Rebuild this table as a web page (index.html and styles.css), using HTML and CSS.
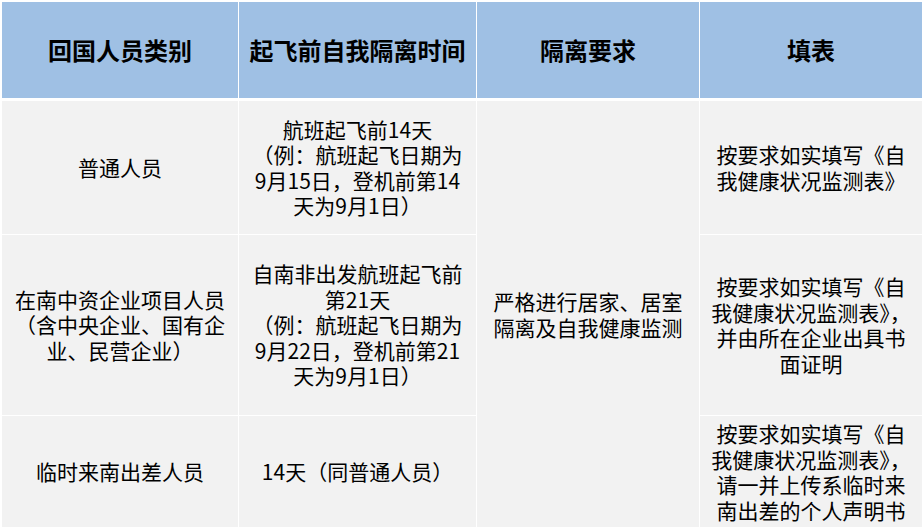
FILE: index.html
```html
<!DOCTYPE html>
<html lang="zh-CN">
<head>
<meta charset="utf-8">
<link rel="stylesheet" href="styles.css">
</head>
<body>
<div class="sheet">
  <div class="cell head">回国人员类别</div>
  <div class="cell head">起飞前自我隔离时间</div>
  <div class="cell head">隔离要求</div>
  <div class="cell head">填表</div>

  <div class="cell">普通人员</div>
  <div class="cell">航班起飞前14天<br>（例：航班起飞日期为<br>9月15日，登机前第14<br>天为9月1日）</div>
  <div class="cell merged">严格进行居家、居室<br>隔离及自我健康监测</div>
  <div class="cell">按要求如实填写《自<br>我健康状况监测表》</div>

  <div class="cell">在南中资企业项目人员<br>（含中央企业、国有企<br>业、民营企业）</div>
  <div class="cell">自南非出发航班起飞前<br>第21天<br>（例：航班起飞日期为<br>9月22日，登机前第21<br>天为9月1日）</div>
  <div class="cell">按要求如实填写《自<br>我健康状况监测表》，<br>并由所在企业出具书<br>面证明</div>

  <div class="cell">临时来南出差人员</div>
  <div class="cell">14天（同普通人员）</div>
  <div class="cell">按要求如实填写《自<br>我健康状况监测表》，<br>请一并上传系临时来<br>南出差的个人声明书</div>
</div>
</body>
</html>
```

FILE: styles.css
```css
html, body {
  margin: 0;
  padding: 0;
  background: #ffffff;
  overflow: hidden;
}

.sheet {
  display: grid;
  grid-template-columns: 236px 237px 222px 222px;
  grid-template-rows: 98px 133px 180px 112px;
  column-gap: 1px;
  row-gap: 1px;
  padding: 2px 0 0 2px;
  background: #ffffff;
  width: max-content;
  font-family: "Noto Sans CJK SC", "Noto Sans", sans-serif;
  color: #000000;
}

.cell {
  display: flex;
  align-items: center;
  justify-content: center;
  text-align: center;
  background: #f2f2f2;
  font-size: 21px;
  line-height: 25.5px;
}

.head {
  background: #9fc0e4;
  font-size: 24px;
  font-weight: 700;
  margin-bottom: 2px;
}

.merged {
  grid-column: 3;
  grid-row: 2 / span 3;
}
```
